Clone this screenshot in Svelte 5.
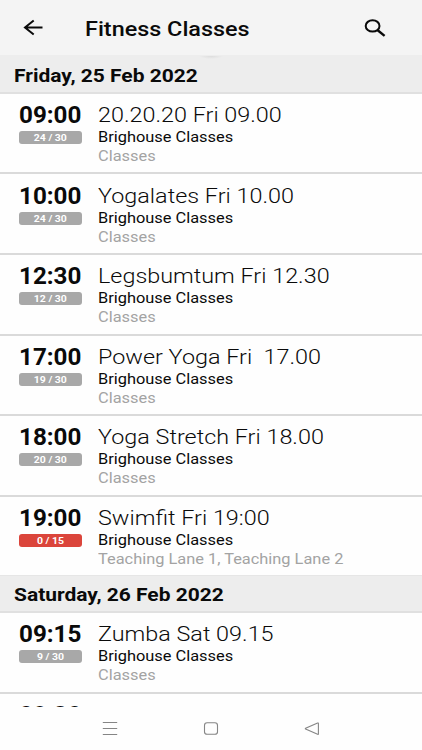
<script>
	const days = [
		{
			date: 'Friday, 25 Feb 2022',
			classes: [
				{ time: '09:00', booked: 24, places: 30, title: '20.20.20 Fri 09.00', room: 'Classes' },
				{ time: '10:00', booked: 24, places: 30, title: 'Yogalates Fri 10.00', room: 'Classes' },
				{ time: '12:30', booked: 12, places: 30, title: 'Legsbumtum Fri 12.30', room: 'Classes' },
				{ time: '17:00', booked: 19, places: 30, title: 'Power Yoga Fri  17.00', room: 'Classes' },
				{ time: '18:00', booked: 20, places: 30, title: 'Yoga Stretch Fri 18.00', room: 'Classes' },
				{ time: '19:00', booked: 0, places: 15, title: 'Swimfit Fri 19:00', room: 'Teaching Lane 1, Teaching Lane 2' }
			]
		},
		{
			date: 'Saturday, 26 Feb 2022',
			classes: [
				{ time: '09:15', booked: 9, places: 30, title: 'Zumba Sat 09.15', room: 'Classes' },
				{ time: '09:30' }
			]
		}
	];
</script>

<div class="screen">
	<header>
		<button class="back" aria-label="Back">
			<svg width="20" height="17" viewBox="0 0 20 17">
				<path d="M19.5 8.5H2M10.7 1.5L2 8.5L10.7 15.5" />
			</svg>
		</button>
		<h1><span class="wide">Fitness Classes</span></h1>
		<button class="search" aria-label="Search">
			<svg width="22" height="18" viewBox="0 0 22 18">
				<ellipse cx="8.6" cy="6.9" rx="6.9" ry="5.7" />
				<path d="M13.4 11L20.6 16.9" stroke-width="2.4" />
			</svg>
		</button>
	</header>

	<main>
		{#each days as day}
			<h2><span class="wide">{day.date}</span></h2>
			<ul>
				{#each day.classes as c}
					<li>
						<div class="slot">
							<strong class="wide">{c.time}</strong>
							{#if c.places}
								<div class="places" class:full={c.booked === 0}>
									<span class="wide">{c.booked} / {c.places}</span>
								</div>
							{/if}
						</div>
						{#if c.title}
							<div class="info">
								<h3><span class="wide">{c.title}</span></h3>
								<p><span class="wide">Brighouse Classes</span></p>
								<p class="room"><span class="wide">{c.room}</span></p>
							</div>
						{/if}
					</li>
				{/each}
			</ul>
		{/each}
	</main>

	<nav>
		<svg width="16" height="14" viewBox="0 0 16 14">
			<path d="M0.8 0.5H15.2M0.8 6.5H15.2M0.8 12.5H15.2" />
		</svg>
		<svg width="16" height="14" viewBox="0 0 16 14">
			<rect x="1.5" y="0.8" width="13" height="11.5" rx="2.6" />
		</svg>
		<svg width="16" height="14" viewBox="0 0 16 14">
			<path d="M14.4 1.4V12Q14.4 12.6 13.6 12.3L1.6 7.1Q1 6.7 1.6 6.3L13.6 1.1Q14.4 0.8 14.4 1.4Z" />
		</svg>
	</nav>
</div>

<style>
	:global(body) {
		background: #fefefe;
	}

	.screen {
		display: flex;
		flex-direction: column;
		height: 750px;
		overflow: hidden;
		font-family: Roboto, sans-serif;
		color: #0a0a0a;
		background: #fefefe;
	}

	h1, h2, h3, p, ul {
		margin: 0;
		padding: 0;
		font-weight: 400;
	}
	.wide {
		display: inline-block;
		transform: scaleX(1.17);
		transform-origin: 0 50%;
		white-space: pre;
	}

	header {
		display: flex;
		align-items: center;
		flex: none;
		height: 55.4px;
		background: #f4f4f4;
	}
	header button {
		display: flex;
		padding: 0;
		border: 0;
		background: none;
	}
	header svg {
		fill: none;
		stroke: #0a0a0a;
		stroke-width: 2;
	}
	.back {
		margin-left: 23px;
	}
	h1 {
		flex: 1;
		margin-left: 42px;
		padding-top: 2px;
		font-size: 20px;
		line-height: 24px;
	}
	h1 .wide {
		font-weight: 500;
	}
	.search {
		margin-right: 36px;
	}

	main {
		flex: 1;
		min-height: 0;
		overflow: hidden;
	}
	h2 {
		box-sizing: border-box;
		height: 37.9px;
		padding: 7.4px 0 0 14.4px;
		border-top: 1px solid #e6e6e6;
		border-bottom: 2px solid #e0e0e0;
		background: #ededed;
		font-size: 18px;
		line-height: 24px;
	}
	h2:first-child {
		/* sits flush under the header bar, with a soft pull shadow */
		height: 38.5px;
		border-top-color: #ededed;
		background: radial-gradient(ellipse 12px 3px at 50% 0, #dcdcdc, #ededed);
	}
	h2 .wide {
		font-weight: 700;
		transform: scaleX(1.165);
	}

	ul {
		list-style: none;
	}
	li {
		display: flex;
		box-sizing: border-box;
		height: 80.6px;
		padding-top: 8.1px;
		border-bottom: 2px solid #dadada;
	}
	li:last-child {
		height: 78.2px;
		border-bottom: 0;
	}

	.slot {
		width: 63px;
		margin-left: 19px;
	}
	.slot strong {
		font-size: 23.5px;
		line-height: 26px;
		font-weight: 700;
		transform: scaleX(1.03);
	}
	.places {
		height: 13px;
		margin-top: 3px;
		border-radius: 3px;
		background: #a8a8a8;
		color: #fff;
		font-size: 9.7px;
		line-height: 14px;
		font-weight: 700;
		text-align: center;
	}
	.places .wide {
		transform: scaleX(1.08);
		transform-origin: 50% 50%;
	}
	.places.full {
		background: #db453b;
	}

	.info {
		margin-left: 16px;
	}
	h3 {
		font-size: 20.5px;
		line-height: 26px;
	}
	h3 .wide {
		font-weight: 300;
		transform: scaleX(1.14);
	}
	.info p {
		font-size: 14px;
		line-height: 19px;
	}
	.info .room {
		color: #a3a3a3;
	}

	nav {
		display: flex;
		justify-content: center;
		align-items: center;
		gap: 85px;
		flex: none;
		height: 43px;
		background: #fefefe;
	}
	nav svg {
		fill: none;
		stroke: #858585;
		stroke-width: 1.1;
	}
</style>
